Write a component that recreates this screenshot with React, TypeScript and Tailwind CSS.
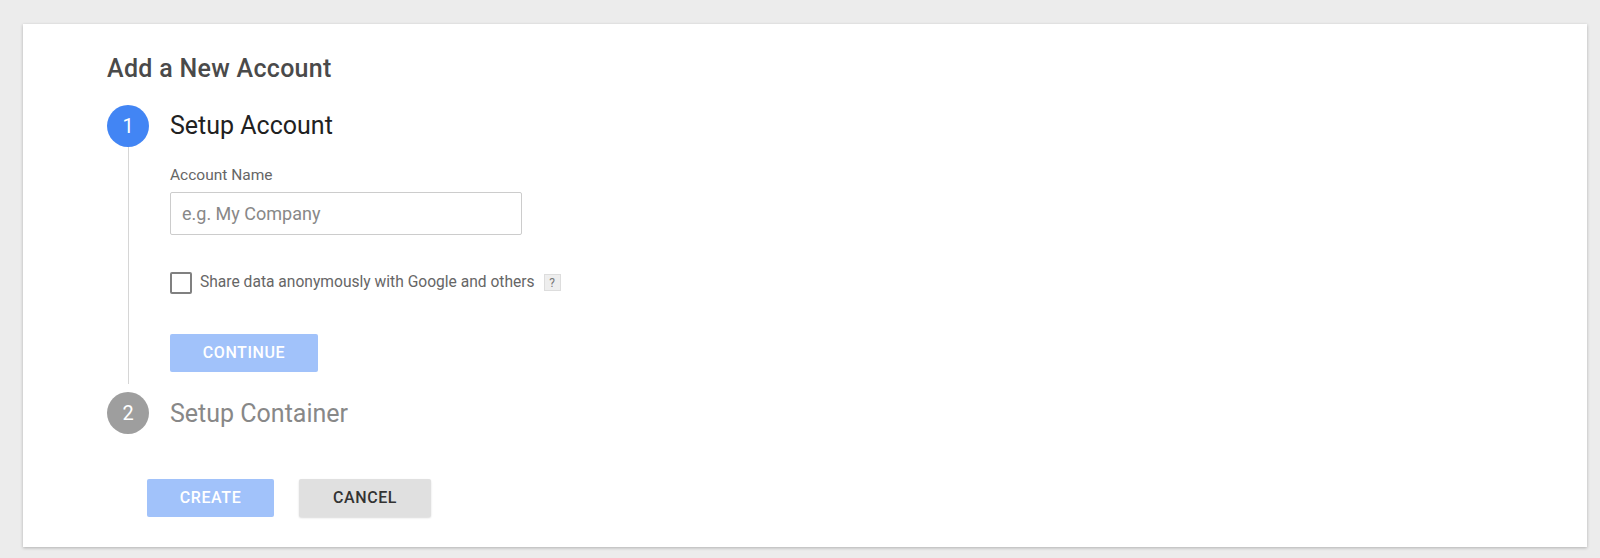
import React, { useState } from 'react';

const App: React.FC = () => {
  const [name, setName] = useState('');
  const [share, setShare] = useState(false);

  return (
    <div className="min-h-screen bg-[#ececec] pt-6 pb-[11px] pl-[23px] font-['Roboto',_'Noto_Sans',_sans-serif]">
      <div className="w-[1564px] h-[523px] bg-white shadow-[0_1px_3px_rgba(0,0,0,0.25)] pt-8 pl-[84px] pb-[31px]">
        <h1 className="text-[25px] leading-[26px] font-medium tracking-[0.3px] text-[#4a4a4a]">Add a New Account</h1>

        <div className="mt-[23px] flex gap-[21px]">
          <div className="flex flex-col items-center w-[42px]">
            <div className="w-[42px] h-[42px] rounded-full bg-[#4285f4] text-white text-[20px] flex items-center justify-center">1</div>
            <div className="flex-1 w-px bg-[#d6d6d6]" />
          </div>
          <div className="pb-[12px]">
            <div className="h-[42px] flex items-center text-[25px] text-[#212121]">Setup Account</div>
            <label className="block mt-[18px] text-[15.5px] leading-5 text-[#666]">Account Name</label>
            <input
              value={name}
              onChange={(e) => setName(e.target.value)}
              placeholder="e.g. My Company"
              className="mt-[7px] w-[352px] h-[43px] border border-[#ccc] rounded-[2px] pl-[11px] text-[18px] text-[#333] placeholder:text-[#888] outline-none"
            />
            <label className="mt-9 flex items-center cursor-pointer">
              <span
                onClick={() => setShare(!share)}
                className="w-[22px] h-[22px] border-2 border-[#808080] rounded-[2px] flex items-center justify-center text-[#4285f4] text-sm"
              >
                {share ? '✓' : ''}
              </span>
              <span className="ml-2 text-[15.6px] text-[#666]">Share data anonymously with Google and others</span>
              <span className="ml-[9px] w-[17px] h-[17px] bg-[#eee] border border-[#ddd] text-[12px] leading-none text-[#777] flex items-center justify-center">?</span>
            </label>
            <button className="mt-10 w-[148px] h-[38px] rounded-[2px] bg-[#a1c2fa] text-white text-[16px] tracking-[0.6px] font-medium">CONTINUE</button>
          </div>
        </div>

        <div className="mt-2 flex items-center gap-[21px]">
          <div className="w-[42px] h-[42px] rounded-full bg-[#9e9e9e] text-white text-[20px] flex items-center justify-center">2</div>
          <div className="text-[25px] text-[#888]">Setup Container</div>
        </div>

        <div className="mt-[45px] ml-[40px] flex gap-[25px]">
          <button className="w-[127px] h-[38px] rounded-[2px] bg-[#a1c2fa] text-white text-[16px] tracking-[0.6px] font-medium">CREATE</button>
          <button className="w-[132px] h-[38px] rounded-[2px] bg-[#e0e0e0] text-[#333] text-[16px] tracking-[0.6px] font-medium shadow-[0_1px_2px_rgba(0,0,0,0.15)]">CANCEL</button>
        </div>
      </div>
    </div>
  );
};

export default App;
